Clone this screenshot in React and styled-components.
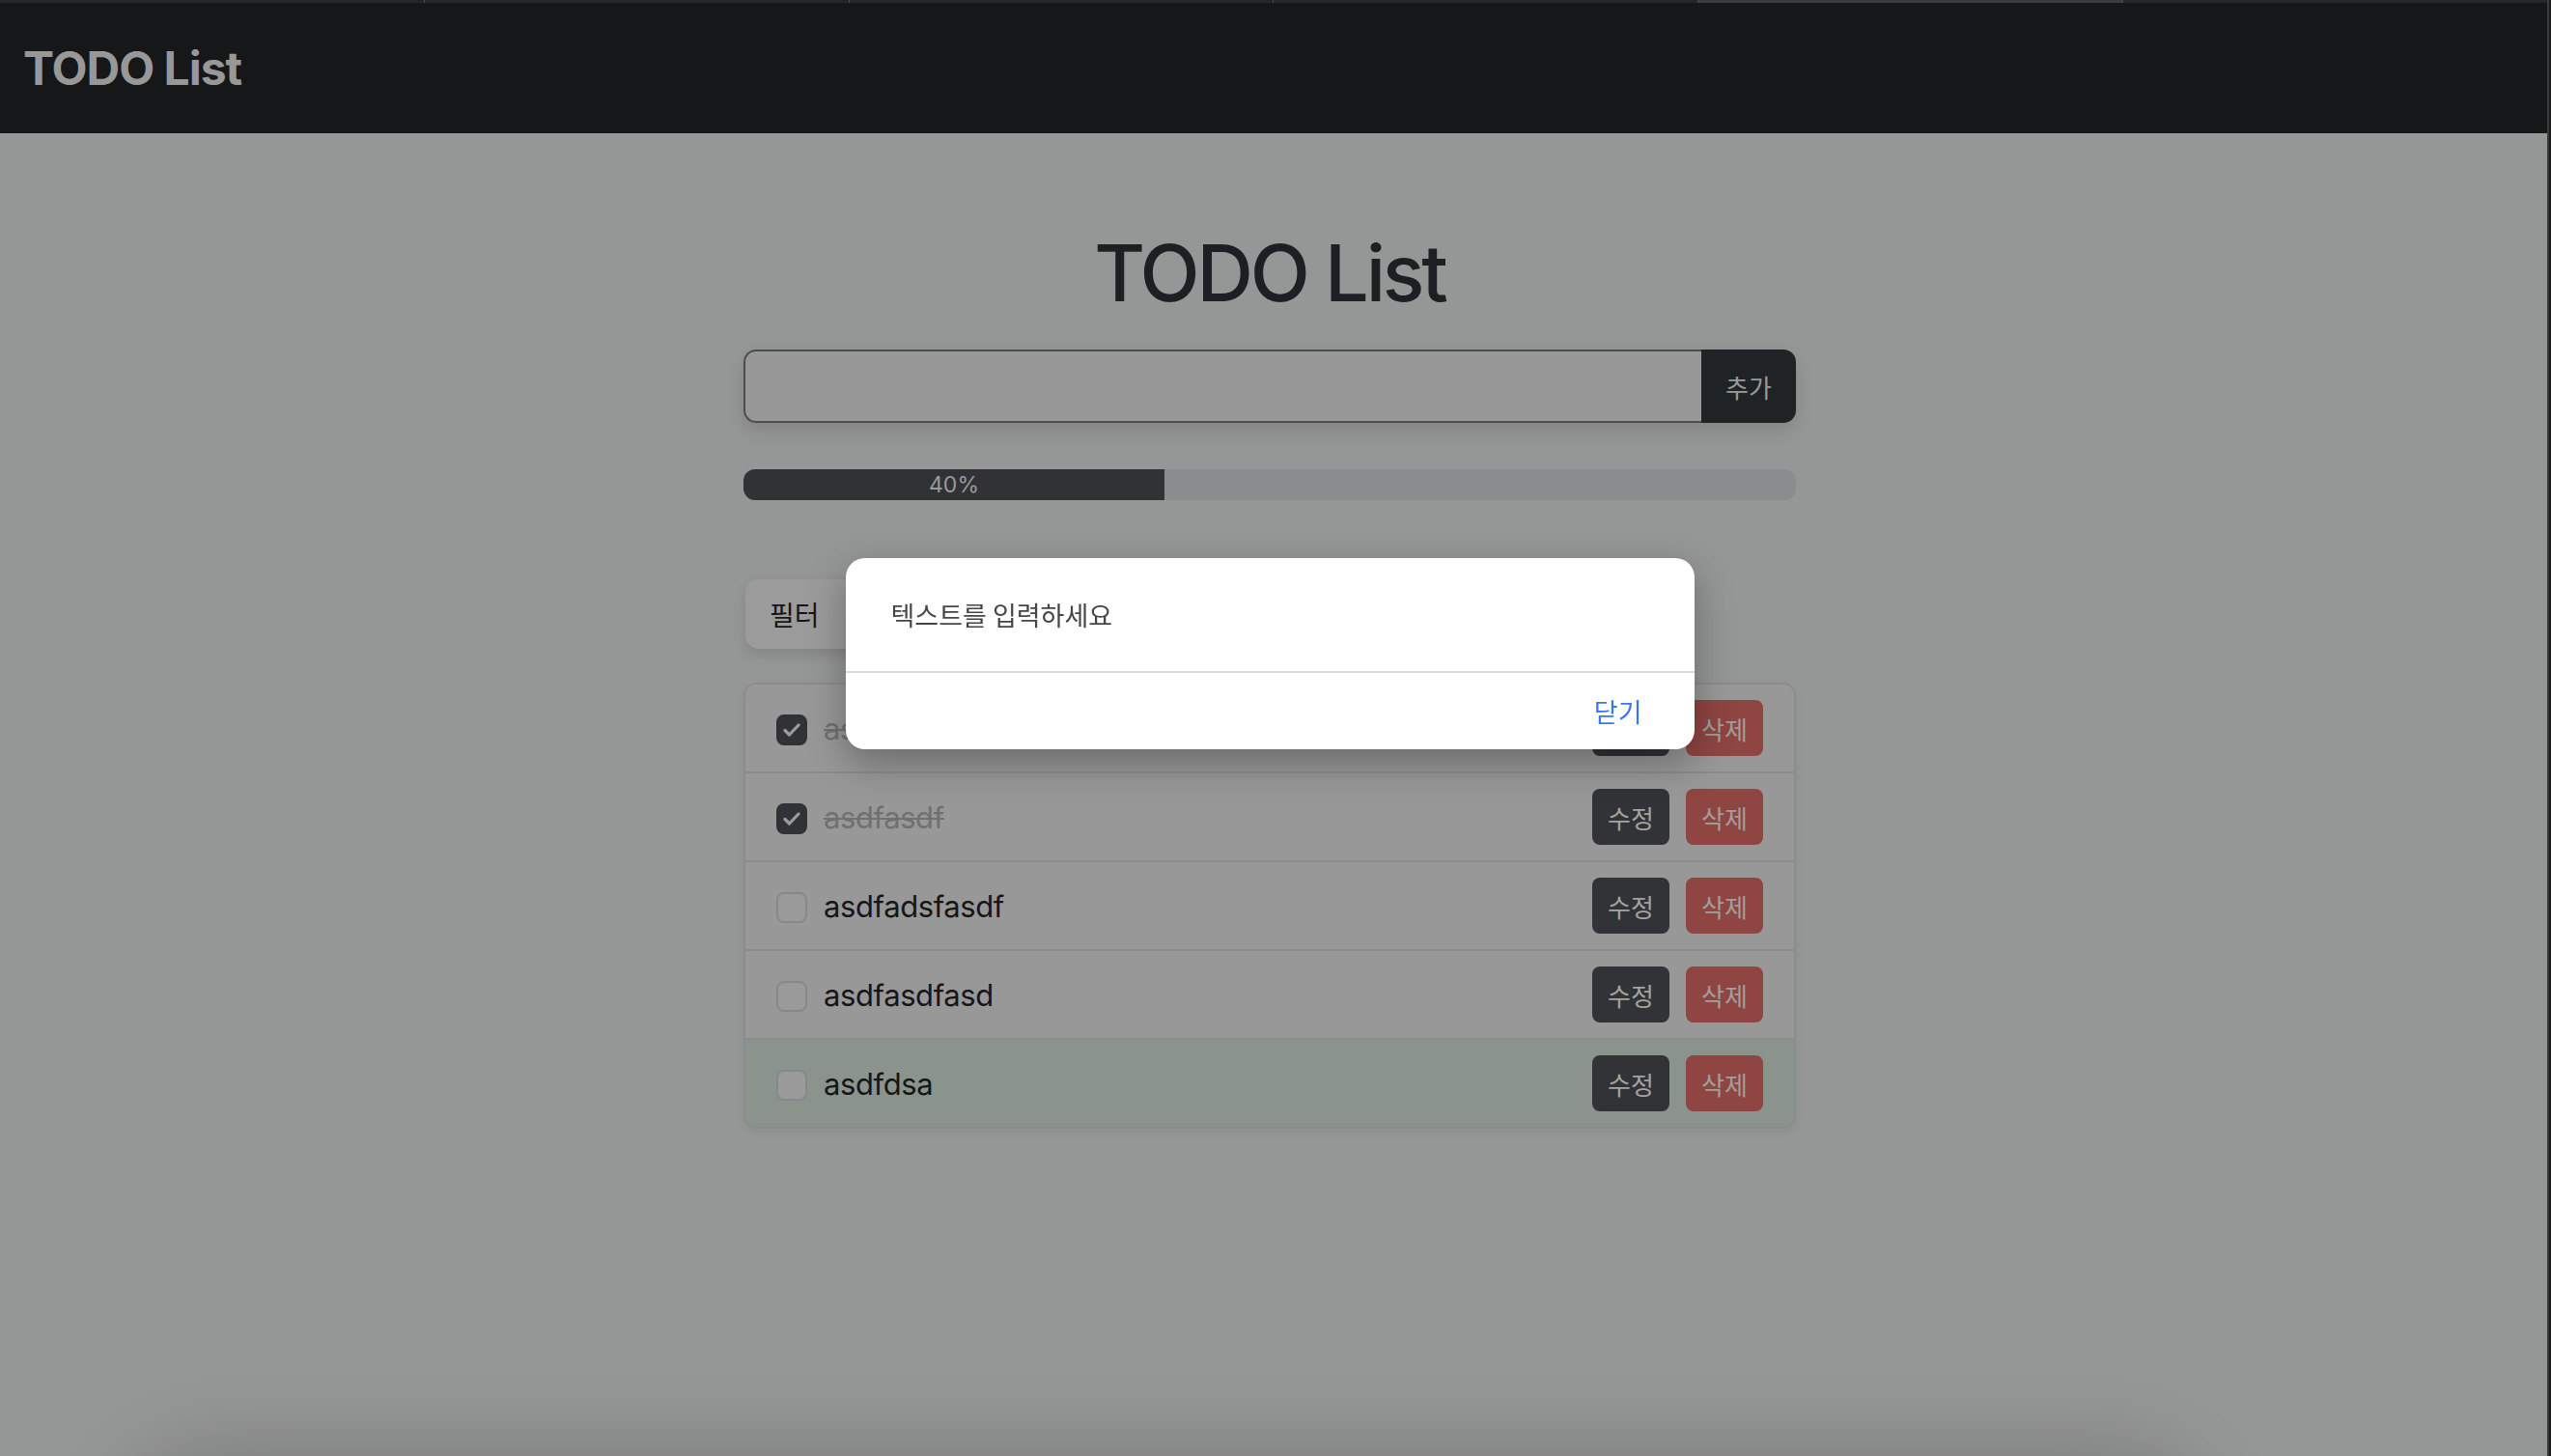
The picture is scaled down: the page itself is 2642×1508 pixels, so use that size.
import React from "react";
import styled, { createGlobalStyle } from "styled-components";

const GlobalStyle = createGlobalStyle`
  html, body { margin: 0; padding: 0; }
  body {
    background: #959796;
    font-family: Inter, "Noto Sans CJK KR", sans-serif;
    overflow: hidden;
  }
  * { box-sizing: border-box; }
`;

const Window = styled.div`
  display: flex;
  min-height: 100vh;
`;

const Content = styled.div`
  flex: 1;
  display: flex;
  flex-direction: column;
`;

const EdgeStrip = styled.div`
  width: 4px;
  background: #1b1b1c;
  border-left: 2px solid #3a3a3b;
`;

const TabStrip = styled.div`
  display: flex;
  height: 3px;
  background: #262627;
`;

const Tab = styled.div`
  flex: 1;
  border-right: 1px solid #4a4a4b;
  background: ${(p) => (p.$active ? "#3c3c3d" : "#262627")};
  &:last-child { border-right: none; }
`;

const Navbar = styled.nav`
  height: 135px;
  background: #161719;
  display: flex;
  align-items: center;
  padding-left: 24px;
`;

const Brand = styled.span`
  font-family: Inter, "Noto Sans CJK KR", sans-serif;
  font-weight: 700;
  font-size: 48px;
  letter-spacing: -1px;
  color: #989898;
`;

const Main = styled.main`
  flex: 1;
  padding-right: 8px;
`;

const Container = styled.div`
  width: 1090px;
  margin: 0 auto;
  display: flex;
  flex-direction: column;
`;

const Heading = styled.h1`
  margin: 97px 0 0;
  text-align: center;
  font-size: 81px;
  line-height: 97px;
  font-weight: 500;
  letter-spacing: -3.2px;
  color: #1d2023;
`;

const InputGroup = styled.div`
  display: flex;
  height: 76px;
  margin-top: 30px;
  border-radius: 13px;
  box-shadow: 0 8px 18px rgba(0, 0, 0, 0.12);
`;

const TextInput = styled.input`
  flex: 1;
  background: #989898;
  border: 2px solid #4d4d4f;
  border-right: none;
  border-radius: 13px 0 0 13px;
  outline: none;
  font-size: 30px;
  padding: 0 20px;
`;

const AddButton = styled.button`
  width: 98px;
  border: none;
  border-radius: 0 13px 13px 0;
  background: #1f2326;
  color: #9a9a9a;
  font-family: "Noto Sans CJK KR", sans-serif;
  font-size: 26px;
`;

const Progress = styled.div`
  margin-top: 48px;
  height: 32px;
  border-radius: 12px;
  background: #8b8c90;
  overflow: hidden;
  display: flex;
`;

const ProgressFill = styled.div`
  background: #313236;
  color: #9a9a9a;
  font-size: 23px;
  display: flex;
  align-items: center;
  justify-content: center;
`;

const FilterButton = styled.button`
  align-self: flex-start;
  margin-top: 82px;
  margin-left: 2px;
  width: 170px;
  height: 72px;
  padding: 0 25px;
  display: flex;
  align-items: center;
  border: none;
  border-radius: 14px;
  background: #9b9b9b;
  color: #161616;
  font-family: "Noto Sans CJK KR", sans-serif;
  font-size: 28px;
  box-shadow: 0 6px 14px rgba(0, 0, 0, 0.12);
`;

const List = styled.ul`
  list-style: none;
  margin: 35px 0 0;
  padding: 0;
  border: 2px solid #8b8c90;
  border-radius: 13px;
  overflow: hidden;
  box-shadow: 0 4px 10px rgba(0, 0, 0, 0.05);
`;

const Row = styled.li`
  height: 92px;
  display: flex;
  align-items: center;
  padding: 0 32px;
  background: ${(p) => (p.$success ? "#8b948c" : "#989898")};
  border-top: 2px solid #8b8c90;
  &:first-child { border-top: none; height: 90px; }
`;

const Check = styled.span`
  width: 32px;
  height: 32px;
  margin-top: 3px;
  border-radius: 8px;
  flex-shrink: 0;
  display: flex;
  align-items: center;
  justify-content: center;
  background: ${(p) => (p.$checked ? "#313236" : "#9a9a9a")};
  border: 2px solid ${(p) => (p.$checked ? "#313236" : "#87888c")};
`;

const Label = styled.span`
  margin-left: 17px;
  font-size: 31px;
  letter-spacing: -0.4px;
  color: ${(p) => (p.$done ? "#707071" : "#161616")};
  text-decoration: ${(p) => (p.$done ? "line-through" : "none")};
  text-decoration-thickness: 2px;
`;

const Actions = styled.div`
  margin-left: auto;
  display: flex;
  gap: 17px;
`;

const RowButton = styled.button`
  width: 80px;
  height: 58px;
  border: none;
  border-radius: 8px;
  font-family: "Noto Sans CJK KR", sans-serif;
  font-size: 26px;
  padding: 0;
  background: ${(p) => (p.$danger ? "#8f4542" : "#323337")};
  color: ${(p) => (p.$danger ? "#a39d9c" : "#a3a3a3")};
`;

const ModalLayer = styled.div`
  position: fixed;
  inset: 0;
  display: flex;
  justify-content: center;
  align-items: flex-start;
  padding: 578px 12px 0 0;
`;

const Modal = styled.div`
  width: 879px;
  background: #ffffff;
  border-radius: 20px;
  box-shadow: 0 14px 40px rgba(0, 0, 0, 0.3);
  display: flex;
  flex-direction: column;
`;

const ModalBody = styled.div`
  height: 119px;
  display: flex;
  align-items: center;
  padding: 0 47px;
  font-family: "Noto Sans CJK KR", sans-serif;
  font-size: 27px;
  color: #454545;
  border-bottom: 2px solid #dadada;
`;

const ModalFooter = styled.div`
  height: 79px;
  display: flex;
  align-items: center;
  justify-content: flex-end;
  padding-right: 54px;
`;

const LinkButton = styled.button`
  border: none;
  background: none;
  padding: 0;
  font-family: "Noto Sans CJK KR", sans-serif;
  font-size: 27px;
  color: #3478f6;
`;

const BottomShade = styled.div`
  position: fixed;
  left: 150px;
  width: 2110px;
  top: calc(100% + 30px);
  height: 200px;
  border-radius: 80px;
  box-shadow: 0 0 90px 30px rgba(0, 0, 0, 0.2);
`;

const todos = [
  { text: "asdfasdf", done: true },
  { text: "asdfasdf", done: true },
  { text: "asdfadsfasdf", done: false },
  { text: "asdfasdfasd", done: false },
  { text: "asdfdsa", done: false, success: true },
];

const CheckMark = () => (
  <svg width="18" height="14" viewBox="0 0 18 14" fill="none">
    <path d="M2 7.5 L6.5 12 L16 2" stroke="#9c9c9c" strokeWidth="3.2" strokeLinecap="round" strokeLinejoin="round" />
  </svg>
);

export default function App() {
  const percent = 40;
  return (
    <>
      <GlobalStyle />
      <Window>
        <Content>
          <TabStrip>
            {[0, 1, 2, 3, 4, 5].map((i) => (
              <Tab key={i} $active={i === 4} />
            ))}
          </TabStrip>
          <Navbar>
            <Brand>TODO List</Brand>
          </Navbar>
          <Main>
            <Container>
              <Heading>TODO List</Heading>
              <InputGroup>
                <TextInput type="text" />
                <AddButton>추가</AddButton>
              </InputGroup>
              <Progress>
                <ProgressFill style={{ width: `${percent}%` }}>{percent}%</ProgressFill>
              </Progress>
              <FilterButton>필터</FilterButton>
              <List>
                {todos.map((t, i) => (
                  <Row key={i} $success={t.success}>
                    <Check $checked={t.done}>{t.done && <CheckMark />}</Check>
                    <Label $done={t.done}>{t.text}</Label>
                    <Actions>
                      <RowButton>수정</RowButton>
                      <RowButton $danger>삭제</RowButton>
                    </Actions>
                  </Row>
                ))}
              </List>
            </Container>
          </Main>
        </Content>
        <EdgeStrip />
      </Window>
      <BottomShade />
      <ModalLayer>
        <Modal>
          <ModalBody>텍스트를 입력하세요</ModalBody>
          <ModalFooter>
            <LinkButton>닫기</LinkButton>
          </ModalFooter>
        </Modal>
      </ModalLayer>
    </>
  );
}
